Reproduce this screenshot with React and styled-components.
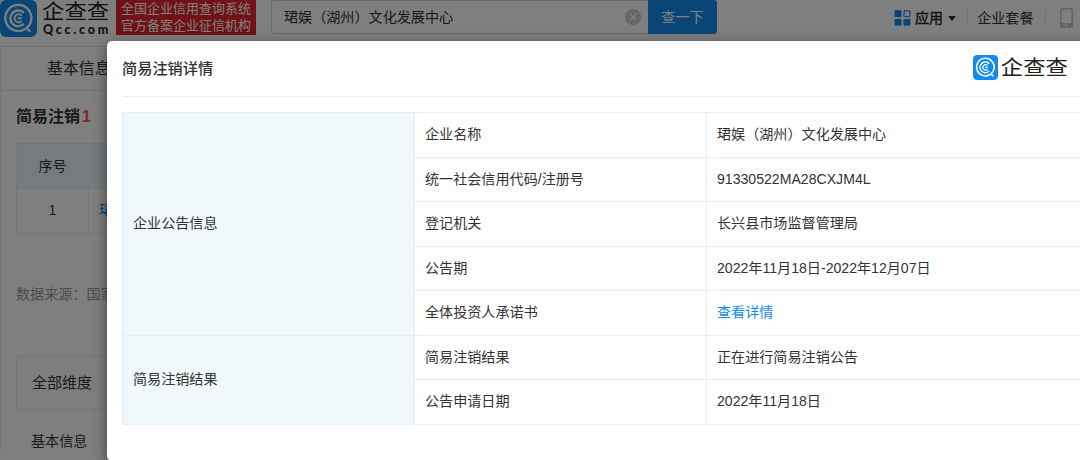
import React from 'react';
import styled, { createGlobalStyle } from 'styled-components';

const Global = createGlobalStyle`
  * { box-sizing: border-box; }
  html, body { margin: 0; height: 100%; overflow: hidden; }
  body { font-family: "Liberation Sans", "Noto Sans CJK SC", sans-serif; font-size: 14.1px; color: #333; background: #fff; }
`;

const Screen = styled.div`position: relative; width: 1080px; height: 460px; overflow: hidden; background: #fff;`;

const Header = styled.header`
  display: flex; align-items: flex-start; height: 47px; border-bottom: 1px solid #e4e4e4;
`;
const Brand = styled.div`display: flex; width: 116px; gap: 5px; flex: none;`;
const BrandNames = styled.div`display: flex; flex-direction: column; white-space: nowrap;`;
const BrandName = styled.span`
  font-family: "Noto Sans CJK SC", sans-serif; font-weight: 400;
  font-size: 22.4px; line-height: 22px; color: #222;
  transform: translateY(-1px) scaleY(.9);
`;
const BrandDomain = styled.span`
  font-family: Lato, sans-serif; font-weight: 900; font-size: 12.5px; line-height: 15px; letter-spacing: 2.75px; color: #222;
  padding-left: 1px;
`;
const Slogan = styled.div`
  display: flex; flex-direction: column; align-items: center; flex: none;
  width: 140px; height: 35px; padding-top: 1px; background: #e0242c; color: #fff;
  font-size: 13px; line-height: 16.5px; white-space: nowrap;
`;
const Search = styled.div`display: flex; flex: none; height: 34px; width: 446px; margin-left: 15px;`;
const SearchField = styled.div`
  display: flex; flex: 1; align-items: center; justify-content: space-between; padding: 0 7px 0 12px;
  border: 1px solid #d4d4d4; border-right: 0; border-radius: 3px 0 0 3px; line-height: 20px;
`;
const SearchButton = styled.div`
  width: 69px; line-height: 34px; text-align: center; color: #fff; background: #128bed; border-radius: 0 3px 3px 0;
`;
const Nav = styled.nav`display: flex; align-items: center; height: 36px; margin-left: 177px; flex: none; white-space: nowrap; line-height: 20px;`;
const Apps = styled.span`display: flex; align-items: center; gap: 4px; color: #222; -webkit-text-stroke: .35px #222;`;
const Caret = styled.i`border: 4.5px solid transparent; border-top: 5px solid #333; border-bottom: 0; margin-left: 1px;`;
const Divider = styled.i`width: 1px; height: 18px; background: #e8e8e8; margin: 0 ${p => p.$right || 0}px 0 11px;`;

const Page = styled.main`width: 400px; border-left: 1px solid #ececec; white-space: nowrap;`;
const Tab = styled.div`height: 44px; line-height: 43px; padding-left: 46px; font-size: 15.9px; border-bottom: 1px solid #e8e8e8;`;
const Section = styled.section`padding-left: 15px;`;
const Heading = styled.h3`
  display: flex; gap: 2px; margin: 0; height: 52px; line-height: 52px; font-size: 16px; font-weight: 700;
  em { font-style: normal; color: #ff5050; }
`;
const List = styled.div`border: 1px solid #e2eef5; width: 360px;`;
const ListRow = styled.div`
  display: flex; height: ${p => (p.$head ? 45 : 44)}px; line-height: ${p => (p.$head ? 44 : 42)}px;
  background: ${p => (p.$head ? '#eff7fc' : '#fff')}; border-bottom: ${p => (p.$head ? '1px solid #e2eef5' : '0')};
`;
const ListCell = styled.div`
  width: ${p => (p.$wide ? 280 : 72)}px; text-align: ${p => (p.$wide ? 'left' : 'center')};
  padding-left: ${p => (p.$wide ? 10 : 0)}px; color: ${p => (p.$wide ? '#128bed' : '#333')};
  border-right: 1px solid ${p => (p.$plain ? 'transparent' : '#e2eef5')};
`;
const Source = styled.p`margin: 50px 0 0; line-height: 20px; color: #999;`;
const Dimension = styled.div`
  margin-top: 52px; width: 360px; height: 54px; line-height: 52px; padding-left: 15px; font-size: 15px;
  border: 1px solid #eaeaea; background: #fdfdfd;
`;
const DimensionItem = styled.div`line-height: 20px; margin-top: 21px; padding-left: 15px;`;

const Backdrop = styled.div`position: absolute; inset: 0; background: rgba(0, 0, 0, .5);`;
const Dialog = styled.section`
  position: absolute; left: 107px; top: 41px; width: 1100px; height: 420px; padding-left: 15px;
  background: #fff; border-radius: 5px; box-shadow: 0 4px 14px rgba(0, 0, 0, .5);
`;
const DialogHeader = styled.div`
  display: flex; justify-content: space-between; align-items: center; height: 56px; padding: 0 139px 3px 0;
  border-bottom: 1px solid #ececec;
`;
const DialogTitle = styled.h2`margin: 0; font-size: 15.2px; font-weight: 500;`;
const DialogBrand = styled.div`display: flex; align-items: center; gap: 3px;`;
const Table = styled.table`
  margin-top: 15px; width: 1010px; table-layout: fixed; border-collapse: collapse;
  td { height: 44.5px; padding: 0 10px 1px; border: 1px solid #e2eff7; vertical-align: middle; line-height: 20px; }
`;
const GroupCell = styled.td`background: #f0f8fc;`;
const Link = styled.a`color: #128bed;`;

const LogoMark = ({ size }) => (
  <svg width={size} height={size} viewBox="0 0 36 36" fill="none" stroke="#fff" strokeLinecap="round">
    <rect width="36" height="36" rx="6" fill="#128bed" stroke="none" />
    <path d="M24.3 28.4A12.7 12.7 0 1 1 30.4 19.5Q29.8 24 26 27.2L28.8 30.3" strokeWidth="2.2" />
    <path d="M22.6 23.8A7.7 7.7 0 1 1 22.6 11.8" strokeWidth="2.2" />
    <path d="M20.6 20.9A3.9 3.9 0 1 1 20.6 14.7M18 17.8H20.6" strokeWidth="1.8" />
  </svg>
);

const ClearIcon = () => (
  <svg width="16" height="16" viewBox="0 0 16 16">
    <circle cx="8" cy="8" r="8" fill="#ccc" />
    <path d="M4.5 4.5l7 7m0-7l-7 7" stroke="#fff" strokeWidth="1.2" />
  </svg>
);

const AppsIcon = () => (
  <svg width="17" height="16" viewBox="0 0 17 16" fill="#128bed">
    <rect x=".5" y=".2" width="7" height="7" rx="1" transform="rotate(3 4 4)" />
    <rect x="10" y=".8" width="5.8" height="5.8" rx="1" fill="none" stroke="#128bed" strokeWidth="1.2" transform="rotate(6 13 4)" />
    <rect x=".5" y="9" width="7" height="6.6" rx="1" transform="rotate(-3 4 12)" />
    <rect x="9.4" y="9" width="7" height="6.6" rx="1" transform="rotate(-5 13 12)" />
  </svg>
);

const PhoneIcon = () => (
  <svg width="13" height="20" viewBox="0 0 13 20" fill="none" stroke="#c4c4c4" strokeWidth="1.6">
    <rect x=".8" y=".8" width="11.4" height="18.4" rx="2" />
    <path d="M1 16.8h11" strokeWidth="3.4" />
    <path d="M5.5 17h2" stroke="#fff" strokeWidth="1.4" />
  </svg>
);

const groups = [
  { name: '企业公告信息', rows: [
    ['企业名称', '珺娱（湖州）文化发展中心'],
    ['统一社会信用代码/注册号', '91330522MA28CXJM4L'],
    ['登记机关', '长兴县市场监督管理局'],
    ['公告期', '2022年11月18日-2022年12月07日'],
    ['全体投资人承诺书', '查看详情', true],
  ] },
  { name: '简易注销结果', rows: [
    ['简易注销结果', '正在进行简易注销公告'],
    ['公告申请日期', '2022年11月18日'],
  ] },
];

export default function App() {
  return (
    <Screen>
      <Global />
      <Header>
        <Brand>
          <LogoMark size={37} />
          <BrandNames>
            <BrandName>企查查</BrandName>
            <BrandDomain>Qcc.com</BrandDomain>
          </BrandNames>
        </Brand>
        <Slogan><span>全国企业信用查询系统</span><span>官方备案企业征信机构</span></Slogan>
        <Search>
          <SearchField><span>珺娱（湖州）文化发展中心</span><ClearIcon /></SearchField>
          <SearchButton>查一下</SearchButton>
        </Search>
        <Nav>
          <Apps><AppsIcon />应用<Caret /></Apps>
          <Divider $right={9} />
          <span>企业套餐</span>
          <Divider $right={14} />
          <PhoneIcon />
        </Nav>
      </Header>
      <Page>
        <Tab>基本信息</Tab>
        <Section>
          <Heading>简易注销<em>1</em></Heading>
          <List>
            <ListRow $head><ListCell $plain>序号</ListCell></ListRow>
            <ListRow><ListCell>1</ListCell><ListCell $wide>珺娱（湖州）文化发展中心</ListCell></ListRow>
          </List>
          <Source>数据来源：国家市场监督管理总局</Source>
          <Dimension>全部维度</Dimension>
          <DimensionItem>基本信息</DimensionItem>
        </Section>
      </Page>
      <Backdrop />
      <Dialog>
        <DialogHeader>
          <DialogTitle>简易注销详情</DialogTitle>
          <DialogBrand><LogoMark size={25} /><BrandName>企查查</BrandName></DialogBrand>
        </DialogHeader>
        <Table>
          <colgroup><col style={{ width: 292 }} /><col style={{ width: 292 }} /><col /></colgroup>
          <tbody>
            {groups.map(group => group.rows.map(([label, value, link], i) => (
              <tr key={label + i}>
                {i === 0 && <GroupCell rowSpan={group.rows.length}>{group.name}</GroupCell>}
                <td>{label}</td>
                <td>{link ? <Link>{value}</Link> : value}</td>
              </tr>
            )))}
          </tbody>
        </Table>
      </Dialog>
    </Screen>
  );
}
